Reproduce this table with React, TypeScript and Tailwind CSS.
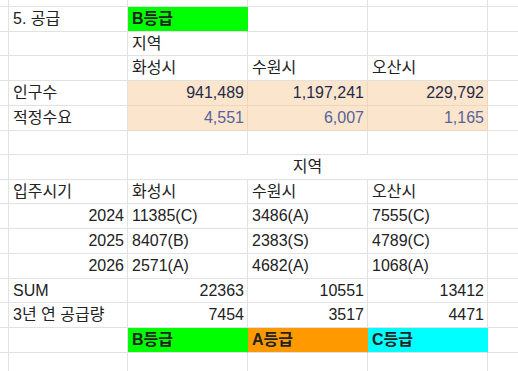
import React from 'react';

type Cell = {
    text?: string;
    span?: number;
    align?: 'left' | 'right' | 'center';
    fill?: 'green' | 'orange' | 'cyan' | 'peach';
    bold?: boolean;
    tone?: 'navy' | 'muted';
};

// column widths include the 1px right gridline
const cols = 'grid-cols-[9px_119px_120px_120px_120px_30px]';

// row heights, each includes the bottom gridline
const rowHeights = [
    'h-[7px]',
    'h-[25px]',
    'h-[24px]',
    'h-[25px]',
    'h-[25px]',
    'h-[25px]',
    'h-[24px]',
    'h-[25px]',
    'h-[24px]',
    'h-[25px]',
    'h-[25px]',
    'h-[25px]',
    'h-[24px]',
    'h-[25px]',
    'h-[25px]',
    'h-[19px]',
];

const rows: Cell[][] = [
    [{}, {}, {}, {}, {}, {}],
    [{}, { text: '5. 공급' }, { text: 'B등급', fill: 'green', bold: true }, {}, {}, {}],
    [{}, {}, { text: '지역' }, {}, {}, {}],
    [{}, {}, { text: '화성시' }, { text: '수원시' }, { text: '오산시' }, {}],
    [
        {},
        { text: '인구수' },
        { text: '941,489', align: 'right', fill: 'peach', tone: 'navy' },
        { text: '1,197,241', align: 'right', fill: 'peach', tone: 'navy' },
        { text: '229,792', align: 'right', fill: 'peach', tone: 'navy' },
        {},
    ],
    [
        {},
        { text: '적정수요' },
        { text: '4,551', align: 'right', fill: 'peach', tone: 'muted' },
        { text: '6,007', align: 'right', fill: 'peach', tone: 'muted' },
        { text: '1,165', align: 'right', fill: 'peach', tone: 'muted' },
        {},
    ],
    [{}, {}, {}, {}, {}, {}],
    [{}, {}, { text: '지역', span: 3, align: 'center' }, {}],
    [{}, { text: '입주시기' }, { text: '화성시' }, { text: '수원시' }, { text: '오산시' }, {}],
    [{}, { text: '2024', align: 'right' }, { text: '11385(C)' }, { text: '3486(A)' }, { text: '7555(C)' }, {}],
    [{}, { text: '2025', align: 'right' }, { text: '8407(B)' }, { text: '2383(S)' }, { text: '4789(C)' }, {}],
    [{}, { text: '2026', align: 'right' }, { text: '2571(A)' }, { text: '4682(A)' }, { text: '1068(A)' }, {}],
    [
        {},
        { text: 'SUM' },
        { text: '22363', align: 'right' },
        { text: '10551', align: 'right' },
        { text: '13412', align: 'right' },
        {},
    ],
    [
        {},
        { text: '3년 연 공급량' },
        { text: '7454', align: 'right' },
        { text: '3517', align: 'right' },
        { text: '4471', align: 'right' },
        {},
    ],
    [
        {},
        {},
        { text: 'B등급', fill: 'green', bold: true },
        { text: 'A등급', fill: 'orange', bold: true },
        { text: 'C등급', fill: 'cyan', bold: true },
        {},
    ],
    [{}, {}, {}, {}, {}, {}],
];

const fillClass = {
    green: 'bg-[#00ff00] border-r-[#00ff00]',
    orange: 'bg-[#ff9900] border-r-[#ff9900]',
    cyan: 'bg-[#00ffff] border-r-[#00ffff]',
    peach: 'bg-[#fce5cd] border-r-[#ecd6bd] border-b-[#ecd6bd]',
};

const SheetCell = ({ cell, last }: { cell: Cell; last: boolean }) => {
    const justify =
        cell.align === 'right'
            ? 'justify-end pr-[3px]'
            : cell.align === 'center'
              ? 'justify-center'
              : 'justify-start pl-[4px]';
    const color =
        cell.tone === 'navy' ? 'text-[#1f2b4a]' : cell.tone === 'muted' ? 'text-[#56639a]' : 'text-[#222222]';
    const spanClass = cell.span === 3 ? 'col-span-3' : '';
    return (
        <div
            className={`flex items-center overflow-hidden whitespace-nowrap border-b border-[#e2e2e2] ${
                last ? '' : 'border-r'
            } ${justify} ${color} ${spanClass} ${cell.fill ? fillClass[cell.fill] : 'border-r-[#e2e2e2]'} ${
                cell.bold ? 'font-bold' : ''
            }`}
        >
            {cell.text}
        </div>
    );
};

export default function App() {
    return (
        <div className="h-[371px] w-[518px] overflow-hidden bg-white text-[16px] leading-none font-['Liberation_Sans','Noto_Sans_CJK_KR',sans-serif]">
            {rows.map((row, r) => (
                <div key={r} className={`grid ${cols} ${rowHeights[r]}`}>
                    {row.map((cell, c) => (
                        <SheetCell key={c} cell={cell} last={c === row.length - 1} />
                    ))}
                </div>
            ))}
        </div>
    );
}
